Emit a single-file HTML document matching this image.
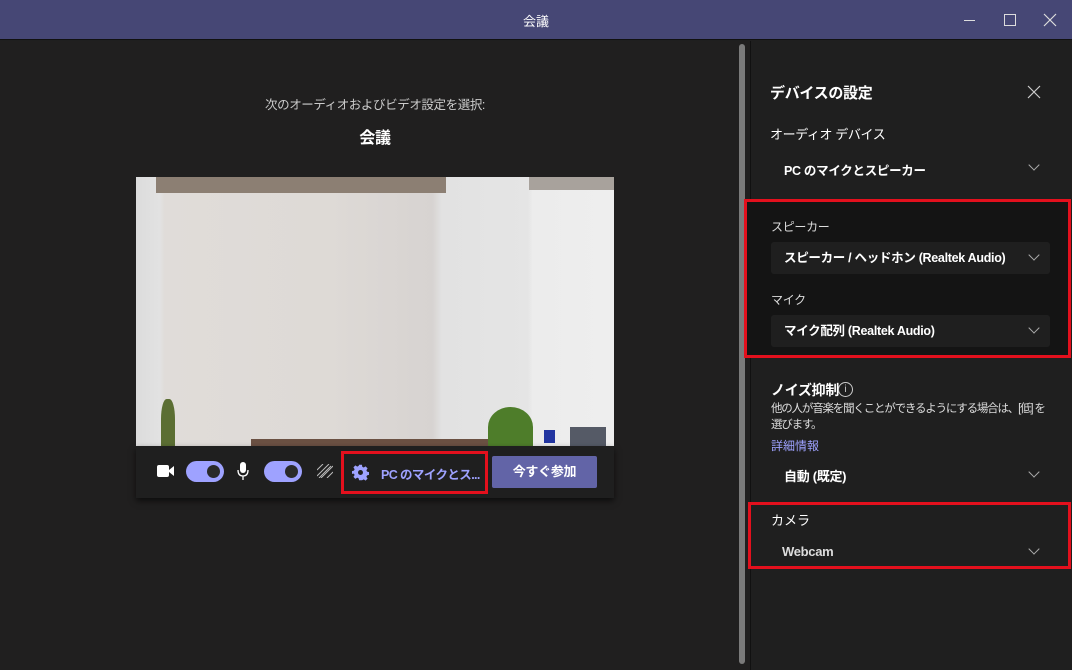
<!DOCTYPE html>
<html><head><meta charset="utf-8"><style>
*{margin:0;padding:0;box-sizing:border-box}
body{width:1072px;height:670px;background:#1f1f1f;font-family:"Liberation Sans","Noto Sans CJK JP",sans-serif;color:#fff;position:relative;overflow:hidden}
.a{position:absolute}
.title{left:0;top:0;width:1072px;height:40px;background:#464775;border-bottom:1px solid #111}
.dd{position:absolute;left:771px;width:279px;height:32px;background:#1f1f1f;border-radius:3px;font-size:12.5px;font-weight:bold;padding:0 0 0 13px;line-height:32px;letter-spacing:-0.3px;white-space:nowrap}
.chev{position:absolute;width:8px;height:8px;border-right:1.2px solid #aaa;border-bottom:1.2px solid #aaa;transform:rotate(45deg)}
.red{position:absolute;border:3px solid #e3101d}
.lbl{position:absolute;font-size:12px;color:#ddd;letter-spacing:-0.3px}
.tog{position:absolute;width:38px;height:21px;border-radius:11px;background:#9ea2ff}
.tog i{position:absolute;right:4px;top:4px;width:13px;height:13px;border-radius:50%;background:#2a2a2a}
.b{font-weight:bold;letter-spacing:-0.3px}
</style></head><body>
<div class="a title"></div>
<div class="a" style="left:0;top:11px;width:1072px;text-align:center;font-size:13px;color:#fff">会議</div>
<div class="a" style="left:964px;top:20px;width:11px;height:1px;background:#ddd"></div>
<div class="a" style="left:1004px;top:14px;width:12px;height:12px;border:1px solid #ddd"></div>
<svg class="a" style="left:1043px;top:13px" width="14" height="14"><path d="M1 1L13 13M13 1L1 13" stroke="#ddd" stroke-width="1.2"/></svg>

<div class="a" style="left:0;top:41px;width:750px;height:629px;background:#201f1f"></div>
<div class="a" style="left:739px;top:44px;width:6px;height:620px;background:#7a7a7a;border-radius:3px"></div>
<div class="a" style="left:750px;top:41px;width:1px;height:629px;background:#111"></div>

<div class="a" style="left:0;top:94px;width:750px;text-align:center;font-size:12.5px;color:#ccc;letter-spacing:-0.4px">次のオーディオおよびビデオ設定を選択:</div>
<div class="a b" style="left:0;top:124px;width:750px;text-align:center;font-size:16px">会議</div>

<div class="a" style="left:136px;top:177px;width:478px;height:270px;background:linear-gradient(90deg,#dcdcdc 0,#e2e2e2 5%,#e0dcd9 6%,#dedad6 40%,#d7d3d1 62%,#e2e2e2 64%,#e5e5e5 82%,#ececec 83%,#eeeeee 100%);overflow:hidden">
 <div class="a" style="left:20px;top:0;width:290px;height:16px;background:#8c7f73"></div>
 <div class="a" style="left:393px;top:0;width:85px;height:13px;background:#a8a29c"></div>
 <div class="a" style="left:115px;top:262px;width:280px;height:10px;background:#6b5143"></div>
 <div class="a" style="left:25px;top:222px;width:14px;height:50px;background:#5b6e33;border-radius:40% 40% 0 0"></div>
 <div class="a" style="left:352px;top:230px;width:45px;height:40px;background:#4e7d2a;border-radius:50% 50% 0 0"></div>
 <div class="a" style="left:408px;top:253px;width:11px;height:13px;background:#2235a0"></div>
 <div class="a" style="left:434px;top:250px;width:36px;height:20px;background:#555a66"></div>
</div>
<div class="a" style="left:136px;top:446px;width:478px;height:52px;background:#1f1f1f;box-shadow:0 3px 6px rgba(0,0,0,.6)"></div>
<svg class="a" style="left:157px;top:464px" width="18" height="14"><rect x="0" y="1" width="12" height="12" rx="2" fill="#fff"/><path d="M12 6L17 2V12L12 8Z" fill="#fff"/></svg>
<div class="tog" style="left:186px;top:461px"><i></i></div>
<svg class="a" style="left:237px;top:462px" width="12" height="18"><rect x="3" y="0" width="6" height="11" rx="3" fill="#fff"/><path d="M1 8Q1 14 6 14Q11 14 11 8M6 14V18" stroke="#fff" fill="none" stroke-width="1.3"/></svg>
<div class="tog" style="left:264px;top:461px"><i></i></div>
<svg class="a" style="left:317px;top:464px" width="16" height="14"><path d="M0 6L6 0M0 12L12 0M4 14L16 2M10 14L16 8M2 14L14 2" stroke="#bbb" stroke-width="1"/></svg>
<div class="red" style="left:341px;top:451px;width:147px;height:43px"></div>
<svg class="a" style="left:352px;top:464px" width="17" height="17" viewBox="0 0 24 24"><path fill="#9ea2ff" d="M10 1h4l.6 3 2 1 2.6-1.7 2.8 2.8L20.3 8.8l1 2 2.7.6v4l-2.7.6-1 2 1.7 2.6-2.8 2.8-2.6-1.7-2 1L14 23h-4l-.6-2.7-2-1-2.6 1.7-2.8-2.8 1.7-2.6-1-2L0 14v-4l2.7-.6 1-2L2 4.8 4.8 2l2.6 1.7 2-1z"/><circle cx="12" cy="12" r="3.5" fill="#1f1f1f"/></svg>
<div class="a b" style="left:381px;top:464px;font-size:12.5px;color:#9ea2ff;letter-spacing:-0.6px">PC のマイクとス...</div>
<div class="a b" style="left:492px;top:456px;width:105px;height:32px;background:#6264a7;border-radius:2px;text-align:center;line-height:32px;font-size:13px">今すぐ参加</div>

<div class="a b" style="left:770px;top:82px;font-size:15px">デバイスの設定</div>
<svg class="a" style="left:1027px;top:85px" width="14" height="14"><path d="M1 1L13 13M13 1L1 13" stroke="#ccc" stroke-width="1.2"/></svg>
<div class="a" style="left:770px;top:124px;font-size:13px;letter-spacing:-0.4px">オーディオ デバイス</div>
<div class="a b" style="left:784px;top:160px;font-size:12.5px">PC のマイクとスピーカー</div>
<div class="chev" style="left:1030px;top:161px"></div>

<div class="a" style="left:744px;top:199px;width:327px;height:159px;background:#141414"></div>
<div class="red" style="left:744px;top:199px;width:327px;height:159px"></div>
<div class="lbl" style="left:771px;top:218px">スピーカー</div>
<div class="dd" style="top:242px">スピーカー / ヘッドホン (Realtek Audio)</div>
<div class="chev" style="left:1030px;top:251px"></div>
<div class="lbl" style="left:771px;top:291px">マイク</div>
<div class="dd" style="top:315px">マイク配列 (Realtek Audio)</div>
<div class="chev" style="left:1030px;top:324px"></div>

<div class="a b" style="left:771px;top:380px;font-size:14px">ノイズ抑制</div>
<div class="a" style="left:838px;top:382px;width:15px;height:15px;border:1px solid #ccc;border-radius:50%;font-size:10px;text-align:center;line-height:13px;color:#ccc">i</div>
<div class="a" style="left:771px;top:401px;font-size:11.5px;color:#ddd;line-height:16px;letter-spacing:-1.2px;white-space:nowrap">他の人が音楽を聞くことができるようにする場合は、[低] を<br>選びます。</div>
<div class="a" style="left:771px;top:437px;font-size:12px;color:#9ea2ff">詳細情報</div>
<div class="a b" style="left:784px;top:466px;font-size:13px">自動 (既定)</div>
<div class="chev" style="left:1030px;top:468px"></div>

<div class="red" style="left:748px;top:502px;width:323px;height:67px"></div>
<div class="a" style="left:771px;top:510px;font-size:13px">カメラ</div>
<div class="a b" style="left:782px;top:544px;font-size:13px;color:#ddd">Webcam</div>
<div class="chev" style="left:1030px;top:545px"></div>
</body></html>
